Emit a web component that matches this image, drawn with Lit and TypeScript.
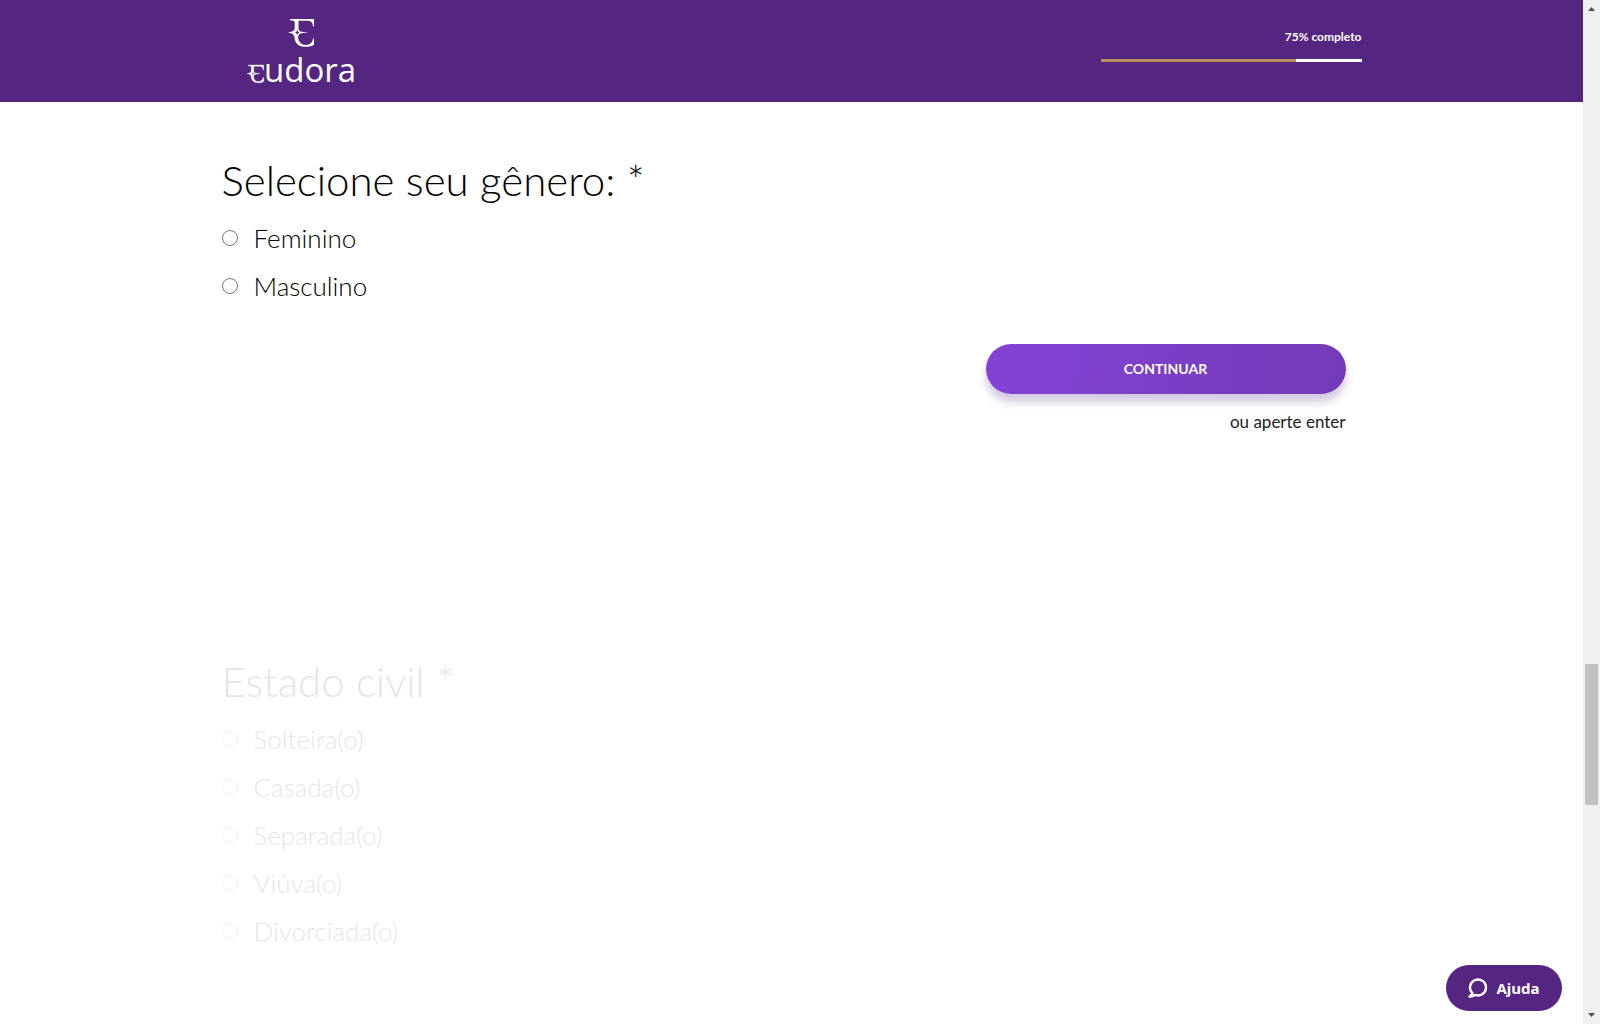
import { LitElement, html, css, svg } from 'lit';
import { customElement, property } from 'lit/decorators.js';
import { classMap } from 'lit/directives/class-map.js';

const emblem = svg`
  <path d="M2 0H26V7.500H25C24.800 3.500 23 1.800 19.500 1.800H10.500V9.500C10.500 11.500 11.500 12.400 13.500 12.700L20 13.500L13.500 14.300C11.500 14.600 10.200 16 10.200 18.500C10.400 23 13.500 25.900 18 25.900C22 25.900 24.500 23.500 25 19.500H26V25.800C24 27.200 21 27.800 17.500 27.800C11 27.800 6.800 24.500 6.500 18.500C6.400 16 5 14.700 3 14.200L0 13.500L3 12.800C5.500 12.200 6.700 11 6.700 9V3.500C6.700 2 5 1.300 2 1.200Z M9.300 10.500C9 12.500 8.500 13 7 13.500C8.500 14 9 14.500 9.300 16.500C9.600 14.500 10.100 14 11.600 13.500C10.100 13 9.600 12.500 9.300 10.500Z" fill-rule="evenodd" fill="currentColor"/>
`;

@customElement('brand-logo')
class BrandLogo extends LitElement {
  static styles = css`
    :host { display: block; }
    .logo { display: block; width: 120px; height: 80px; color: #fff; }
    .word { font: 400 33px 'Open Sans', 'Noto Sans', sans-serif; fill: currentColor; }
  `;
  render() {
    return html`
      <svg class="logo" viewBox="0 0 120 80" role="img" aria-label="Eudora">
        <g transform="translate(41 4)">${emblem}</g>
        <g transform="translate(0 50) scale(0.640)" stroke="currentColor" stroke-width="0.600">${emblem}</g>
        <text class="word" x="17" y="67">udora</text>
      </svg>
    `;
  }
}

@customElement('form-progress')
class FormProgress extends LitElement {
  @property({ type: Number }) value = 0;
  static styles = css`
    :host { display: block; width: 261px; }
    .label {
      display: block;
      text-align: right;
      color: #fff;
      font: 700 12px/20px Lato, sans-serif;
    }
    .track { margin-top: 12px; height: 3px; background: #fff; }
    .fill { height: 100%; background: #b8925a; }
  `;
  render() {
    return html`
      <span class="label" id="label">${this.value}% completo</span>
      <div class="track" role="progressbar" aria-labelledby="label" aria-valuenow=${this.value}>
        <div class="fill" style="width:${this.value}%"></div>
      </div>
    `;
  }
}

@customElement('choice-question')
class ChoiceQuestion extends LitElement {
  @property() heading = '';
  @property() name = '';
  @property({ type: Array }) options: string[] = [];
  @property({ type: Boolean }) active = false;
  static styles = css`
    :host { display: block; }
    .question { margin: 0; padding: 0; border: 0; min-width: 0; color: #000; }
    .question.muted { opacity: 0.1; }
    .heading { padding: 0; font: 300 42px/56px Lato, sans-serif; }
    .options { display: flex; flex-direction: column; align-items: flex-start; padding-top: 6px; }
    .option {
      display: flex;
      align-items: center;
      gap: 16px;
      font: 300 26px/48px Lato, sans-serif;
    }
    .radio { width: 16px; height: 16px; margin: 0; }
  `;
  render() {
    return html`
      <fieldset class=${classMap({ question: true, muted: !this.active })}>
        <legend class="heading">${this.heading} *</legend>
        <div class="options">
          ${this.options.map(
            (option) => html`
              <label class="option">
                <input class="radio" type="radio" name=${this.name} value=${option} />
                ${option}
              </label>
            `,
          )}
        </div>
      </fieldset>
    `;
  }
}

@customElement('app-root')
class AppRoot extends LitElement {
  static styles = css`
    :host { display: block; }
    .window { display: flex; height: 100vh; background: #fff; }
    .page { flex: 1; min-width: 0; overflow: hidden; }
    .header { background: #542682; }
    .bar {
      display: flex;
      justify-content: space-between;
      align-items: flex-start;
      max-width: 1140px;
      margin: 0 auto;
      padding: 15px 0 7px;
    }
    .brand { padding-left: 25px; }
    .progress { padding-top: 12px; }
    .content { max-width: 1140px; margin: 0 auto; }
    .step { min-height: 451px; padding-top: 50px; }
    .actions {
      display: flex;
      flex-direction: column;
      align-items: flex-end;
      gap: 16px;
      padding: 34px 16px 0;
    }
    .continue {
      width: 360px;
      height: 50px;
      padding: 0;
      border: 0;
      border-radius: 25px;
      background: linear-gradient(100deg, #8542d6, #733ab8);
      box-shadow: 0 8px 8px rgba(84, 38, 130, 0.25);
      color: #fff;
      font: 700 14px/20px Lato, sans-serif;
      cursor: pointer;
    }
    .hint { margin: 0; color: #222; font: 400 17px/24px Lato, sans-serif; }
    .help {
      position: fixed;
      right: 38px;
      bottom: 13px;
      display: flex;
      align-items: center;
      justify-content: center;
      gap: 8px;
      width: 116px;
      height: 46px;
      padding: 0;
      border: 0;
      border-radius: 23px;
      background: #542682;
      color: #fff;
      font: 700 15px/20px 'Noto Sans', sans-serif;
      cursor: pointer;
    }
    .scrollbar {
      display: flex;
      flex-direction: column;
      align-items: center;
      width: 17px;
      background: #f0f0f0;
    }
    .arrow { display: block; width: 17px; height: 17px; fill: #505050; }
    .before { flex: 647; }
    .thumb { flex: 141; width: 13px; background: #c1c1c1; }
    .after { flex: 202; }
  `;
  render() {
    return html`
      <div class="window">
        <div class="page">
          <header class="header">
            <div class="bar">
              <brand-logo class="brand"></brand-logo>
              <form-progress class="progress" .value=${75}></form-progress>
            </div>
          </header>
          <main class="content">
            <section class="step">
              <choice-question
                active
                heading="Selecione seu gênero:"
                name="genero"
                .options=${['Feminino', 'Masculino']}
              ></choice-question>
              <div class="actions">
                <button class="continue" type="button">CONTINUAR</button>
                <p class="hint">ou aperte enter</p>
              </div>
            </section>
            <section class="step">
              <choice-question
                heading="Estado civil"
                name="estado-civil"
                .options=${['Solteira(o)', 'Casada(o)', 'Separada(o)', 'Viúva(o)', 'Divorciada(o)']}
              ></choice-question>
            </section>
          </main>
        </div>
        <div class="scrollbar" aria-hidden="true">
          <svg class="arrow" viewBox="0 0 17 17"><path d="M5 11L8.500 7L12 11Z" /></svg>
          <div class="before"></div>
          <div class="thumb"></div>
          <div class="after"></div>
          <svg class="arrow" viewBox="0 0 17 17"><path d="M5 6L8.500 10L12 6Z" /></svg>
        </div>
        <button class="help" type="button">
          <svg width="20" height="20" viewBox="0 0 20 20" fill="none" stroke="currentColor" stroke-width="2.400" stroke-linejoin="round" aria-hidden="true">
            <path d="M4.400 15.200A8 8 0 1 1 7 16.900C5.500 18 3.500 18.700 1.500 18.500C3 17.600 4 16.500 4.400 15.200Z" />
          </svg>
          Ajuda
        </button>
      </div>
    `;
  }
}
